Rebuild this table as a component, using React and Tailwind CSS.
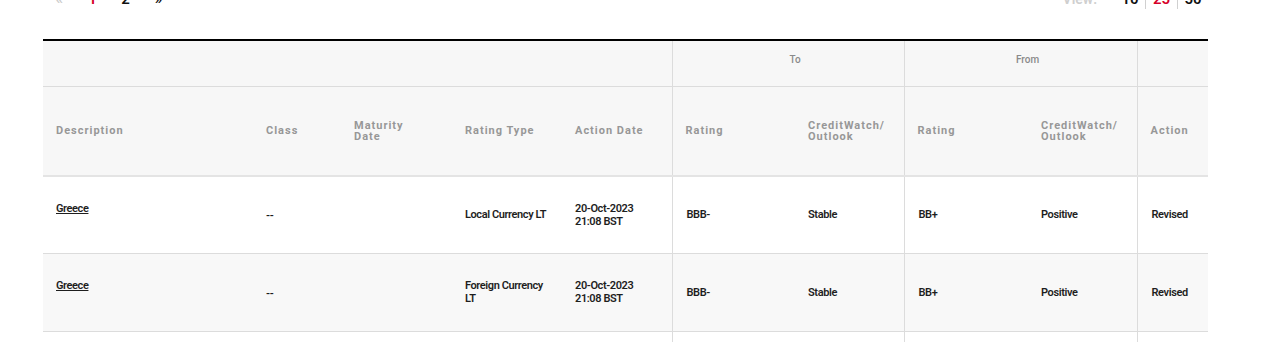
const cols = [210, 88, 111, 110, 110, 123, 109, 124, 109, 71]

const rows = [
  { type: ['Local Currency LT'], bg: 'bg-white', h: 'h-[77px]' },
  { type: ['Foreign Currency', 'LT'], bg: 'bg-[#f8f8f8]', h: 'h-[78px]' },
]

function HeadCell({ children, line }) {
  return (
    <th
      className={`px-[13px] text-left align-middle text-[11px] font-bold leading-[11px] tracking-[1px] text-[#979797] ${line ? 'border-l border-[#dcdcdc]' : ''}`}
    >
      {children}
    </th>
  )
}

export default function App() {
  return (
    <div className="h-[342px] w-[1280px] overflow-hidden bg-white font-['Roboto','Liberation_Sans',sans-serif]">
      <div className="-mt-[11px] ml-[43px] mr-[72px] flex h-5 items-center justify-between text-[15px] font-semibold leading-5">
        <div className="flex">
          <span className="w-[33px] text-center text-[#cccccc]">«</span>
          <span className="w-[33px] text-center text-[#d6002a]">1</span>
          <span className="w-[33px] text-center text-[#111]">2</span>
          <span className="w-[33px] text-center text-[#111]">»</span>
        </div>
        <div className="flex items-center">
          <span className="mr-[18px] text-[14px] text-[#cfcfcf]">View:</span>
          <span className="w-[30px] text-center text-[#111]">10</span>
          <span className="w-[32px] border-l border-[#d0d0d0] text-center text-[#d6002a]">25</span>
          <span className="w-[31px] border-l border-[#d0d0d0] text-center text-[#111]">50</span>
        </div>
      </div>

      <table className="ml-[43px] mt-[30px] w-[1165px] table-fixed border-collapse border-t-2 border-black">
        <colgroup>
          {cols.map((w, i) => (
            <col key={i} style={{ width: w }} />
          ))}
        </colgroup>
        <thead className="bg-[#f7f7f7]">
          <tr className="h-[46px] border-b border-[#dcdcdc]">
            <th colSpan={5}></th>
            <th colSpan={2} className="border-l border-[#dcdcdc] pb-[7px] pl-[14px] text-center text-[10px] font-medium text-[#8a8a8a]">
              To
            </th>
            <th colSpan={2} className="border-l border-[#dcdcdc] pb-[7px] pl-[14px] text-center text-[10px] font-medium text-[#8a8a8a]">
              From
            </th>
            <th className="border-l border-[#dcdcdc]"></th>
          </tr>
          <tr className="h-[90px] border-b-2 border-[#e4e4e4]">
            <HeadCell>Description</HeadCell>
            <HeadCell>Class</HeadCell>
            <HeadCell>
              Maturity
              <br />
              Date
            </HeadCell>
            <HeadCell>Rating Type</HeadCell>
            <HeadCell>Action Date</HeadCell>
            <HeadCell line>Rating</HeadCell>
            <HeadCell>
              CreditWatch/
              <br />
              Outlook
            </HeadCell>
            <HeadCell line>Rating</HeadCell>
            <HeadCell>
              CreditWatch/
              <br />
              Outlook
            </HeadCell>
            <HeadCell line>Action</HeadCell>
          </tr>
        </thead>
        <tbody className="text-[11px] font-semibold leading-[13px] tracking-[-0.4px] text-[#1e1e1e]">
          {rows.map((r, i) => (
            <tr key={i} className={`${r.h} border-b border-[#dcdcdc] ${r.bg}`}>
              <td className="px-[13px] align-middle">
                <a href="#" className="underline">Greece</a>
                <br />
                &nbsp;
              </td>
              <td className="px-[13px] pt-[2px] align-middle">--</td>
              <td className="px-[13px] align-middle"></td>
              <td className="px-[13px] align-middle">
                {r.type.map((t, j) => (
                  <div key={j}>{t}</div>
                ))}
              </td>
              <td className="px-[13px] align-middle">
                20-Oct-2023
                <br />
                21:08 BST
              </td>
              <td className="border-l border-[#dcdcdc] px-[14px] align-middle">BBB-</td>
              <td className="px-[13px] align-middle">Stable</td>
              <td className="border-l border-[#dcdcdc] px-[14px] align-middle">BB+</td>
              <td className="px-[13px] align-middle">Positive</td>
              <td className="border-l border-[#dcdcdc] px-[14px] align-middle">Revised</td>
            </tr>
          ))}
          <tr className="h-[20px] bg-white">
            <td colSpan={5}></td>
            <td colSpan={2} className="border-l border-[#dcdcdc]"></td>
            <td colSpan={2} className="border-l border-[#dcdcdc]"></td>
            <td className="border-l border-[#dcdcdc]"></td>
          </tr>
        </tbody>
      </table>
    </div>
  )
}
